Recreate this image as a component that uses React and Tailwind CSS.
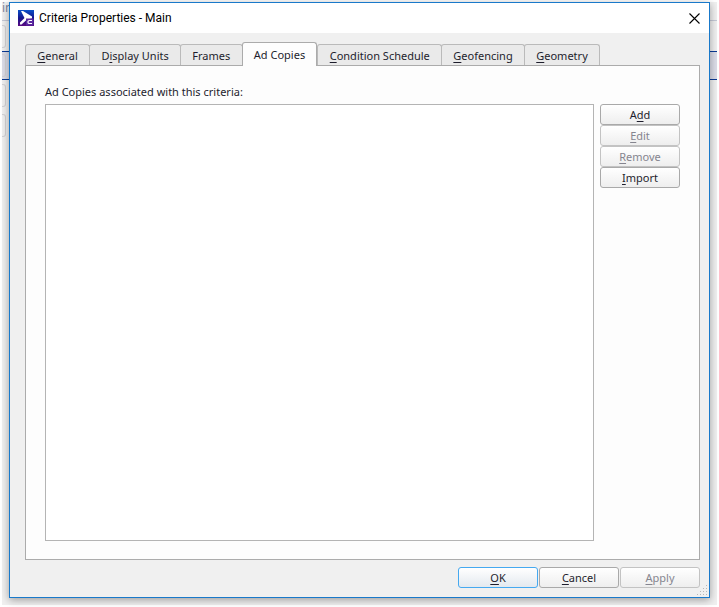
import { useState } from 'react';

const tabs = [
    { id: 'general', before: '', key: 'G', after: 'eneral' },
    { id: 'display', before: 'D', key: 'i', after: 'splay Units' },
    { id: 'frames', before: 'Frames', key: '', after: '' },
    { id: 'copies', before: 'Ad Copies', key: '', after: '' },
    { id: 'schedule', before: '', key: 'C', after: 'ondition Schedule' },
    { id: 'geofencing', before: '', key: 'G', after: 'eofencing' },
    { id: 'geometry', before: '', key: 'G', after: 'eometry' },
];

// dots of the resize grip, bottom right triangle
const gripDots = [[9, 0], [6, 3], [9, 3], [3, 6], [6, 6], [9, 6], [0, 9], [3, 9], [6, 9], [9, 9]];

function Mnemonic({ before = '', k, after = '' }) {
    return (
        <span>
            {before}
            {k && <span className="underline underline-offset-2">{k}</span>}
            {after}
        </span>
    );
}

function PushButton({ isDefault, disabled, children }) {
    const tone = disabled
        ? 'border-[#c3c3c3] to-[#eeeeee] text-[#85858f]'
        : isDefault
            ? 'border-[#45a9f0] to-[#e3e9ef] text-[#1e1e2d]'
            : 'border-[#a9a9a9] to-[#eeeeee] text-[#1e1e2d]';
    return (
        <button
            type="button"
            disabled={disabled}
            className={`flex h-[21px] w-20 items-center justify-center rounded-[3px] border bg-linear-to-b from-white pt-[2px] ${tone}`}
        >
            {children}
        </button>
    );
}

function AppIcon() {
    return (
        <svg className="size-4" viewBox="0 0 16 16" aria-hidden="true">
            <defs>
                <linearGradient id="appIcon" x1="0" y1="0" x2="0" y2="1">
                    <stop offset="0" stopColor="#0a50c8" />
                    <stop offset="0.5" stopColor="#14148c" />
                    <stop offset="1" stopColor="#5a0a82" />
                </linearGradient>
            </defs>
            <rect width="16" height="16" fill="url(#appIcon)" />
            <path d="M3 1 5 1 14 6.5 14 8.5 9 9.5 3.5 14.5 2 14.5 2 12.5 6.5 8Z" fill="#fff" />
            <rect x="8" y="8.5" width="7.5" height="7" fill="#5a28a0" />
            <path d="M14 10.5h-2.4q-1.6 0-1.6 1v1q0 1 1.6 1H14" fill="none" stroke="#fff" strokeWidth="1.2" />
        </svg>
    );
}

function SizeGrip() {
    return (
        <svg className="absolute right-[2px] bottom-[2px] size-[10px]" viewBox="0 0 10 10" fill="#b8b8b8" aria-hidden="true">
            {gripDots.map(([x, y]) => (
                <rect key={`${x}-${y}`} x={x} y={y} width="1" height="1" />
            ))}
        </svg>
    );
}

function BackdropRow({ className }) {
    return (
        <div className={`flex items-center ${className}`}>
            <div className="h-[23px] w-1 rounded-r-[3px] border border-l-0 border-[#d2d2d6]" />
        </div>
    );
}

// the application window that the dialog covers
function Backdrop() {
    return (
        <div className="min-h-[calc(100vh-4px)] overflow-hidden bg-[#f0f0f0] text-xs" aria-hidden="true">
            <div className="h-[19px] border-b border-[#c5c9d6] leading-3 text-[#8187a0]">in</div>
            <BackdropRow className="h-[30px]" />
            <BackdropRow className="h-[29px] border-y border-[#0a3a96] bg-[#dcdde8]" />
            <BackdropRow className="h-[30px]" />
            <BackdropRow className="h-[30px]" />
        </div>
    );
}

function App() {
    const [active, setActive] = useState('copies');

    return (
        <div className="relative min-h-screen bg-white p-[2px] font-['Noto_Sans',sans-serif] text-[11px] text-[#1e1e2d]">
            <Backdrop />
            <div
                role="dialog"
                aria-labelledby="title"
                className="absolute inset-x-[9px] top-[2px] bottom-[9px] flex flex-col border border-[#1979ca] bg-[#f0f0f0] shadow-[0_2px_8px_rgba(0,0,0,0.35)]"
            >
                <header className="flex h-[30px] shrink-0 items-center gap-[5px] bg-white pr-[9px] pl-2 text-black">
                    <AppIcon />
                    <h1 id="title" className="flex-1 font-[Roboto,sans-serif] text-xs">Criteria Properties - Main</h1>
                    <button type="button" aria-label="Close">
                        <svg className="size-[11px]" viewBox="0 0 11 11" fill="none" stroke="#000" strokeWidth="1.1">
                            <path d="M.5.5 10.5 10.5M10.5.5.5 10.5" />
                        </svg>
                    </button>
                </header>

                <div className="flex flex-1 flex-col py-[9px] pr-[9px] pl-[15px]">
                    <div role="tablist" className="flex w-[575px] items-end">
                        {tabs.map((tab) => (
                            <button
                                key={tab.id}
                                type="button"
                                role="tab"
                                aria-selected={tab.id === active}
                                onClick={() => setActive(tab.id)}
                                className={`grow rounded-t-[3px] border border-b-0 px-[11px] pt-[2px] whitespace-nowrap ${
                                    tab.id === active
                                        ? 'relative -mb-px h-6 border-[#ababab] bg-[#fdfdfd]'
                                        : '-mr-px h-[21px] border-[#bababa] bg-[#eaeaea] last:mr-0'
                                }`}
                            >
                                <Mnemonic before={tab.before} k={tab.key} after={tab.after} />
                            </button>
                        ))}
                    </div>

                    <section className="flex flex-1 flex-col border border-[#ababab] bg-[#fdfdfd] px-[19px] py-[18px]">
                        <h2 id="list-label" className="pb-1 leading-4">Ad Copies associated with this criteria:</h2>
                        <div className="flex flex-1 gap-[6px]">
                            <div role="listbox" aria-labelledby="list-label" className="flex-1 border border-[#b4b4b4] bg-white" />
                            <div className="flex flex-col">
                                <PushButton><Mnemonic before="A" k="d" after="d" /></PushButton>
                                <PushButton disabled><Mnemonic k="E" after="dit" /></PushButton>
                                <PushButton disabled><Mnemonic k="R" after="emove" /></PushButton>
                                <PushButton><Mnemonic k="I" after="mport" /></PushButton>
                            </div>
                        </div>
                    </section>

                    <footer className="flex justify-end gap-px pt-[7px]">
                        <PushButton isDefault><Mnemonic k="O" after="K" /></PushButton>
                        <PushButton><Mnemonic k="C" after="ancel" /></PushButton>
                        <PushButton disabled><Mnemonic k="A" after="pply" /></PushButton>
                    </footer>
                </div>
                <SizeGrip />
            </div>
        </div>
    );
}

export default App;
